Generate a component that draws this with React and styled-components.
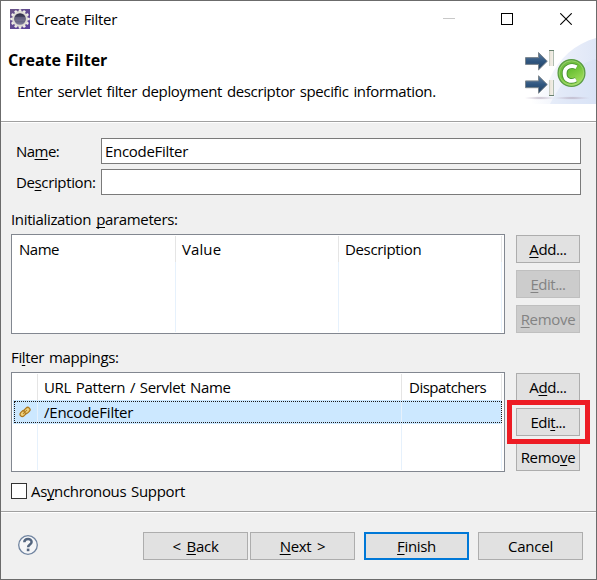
import React from 'react';
import styled, { createGlobalStyle } from 'styled-components';

const Global = createGlobalStyle`
  * { box-sizing: border-box; }
  body { margin: 0; background: #fff; }
`;

const Window = styled.main`
  width: 597px;
  height: 580px;
  display: flex;
  flex-direction: column;
  border: 1px solid #6b6b6b;
  background: #f0f0f0;
  color: #000;
  font: 15px/20px "Open Sans", "Noto Sans", sans-serif;
  overflow: hidden;
`;

const Text = styled.span`
  display: inline-block;
  white-space: pre;
  letter-spacing: ${p => p.$ls ?? -0.25}px;
  word-spacing: ${p => p.$ws ?? 0}px;
`;

const Key = styled.span`
  text-decoration: underline;
  text-decoration-thickness: 1px;
  text-underline-offset: 2px;
  text-decoration-skip-ink: none;
`;

const TitleBar = styled.header`
  height: 37px;
  display: flex;
  align-items: flex-start;
  padding: 8px 0 0 9px;
  background: #fff;
`;

const Caption = styled.div`
  flex: 1;
  padding-left: 5px;
`;

const WindowControls = styled.div`
  display: flex;
  padding: 4px 24px 0 0;
  svg { display: block; }
  svg:nth-child(2) { margin: 0 47px 0 46px; }
`;

const Banner = styled.section`
  height: 84px;
  display: flex;
  justify-content: space-between;
  background: #fff;
  border-bottom: 1px solid #a0a0a0;
`;

const BannerCopy = styled.div`
  padding: 12px 0 0 7px;
`;

const Heading = styled.h1`
  margin: 0;
  font-size: 16px;
  line-height: 20px;
  font-weight: 700;
  letter-spacing: 0;
`;

const Message = styled.p`
  margin: 11px 0 0 9px;
`;

const Content = styled.section`
  height: 389px;
  border-top: 1px solid #fff;
  padding: 15px 15px 0 10px;
`;

const Fields = styled.div`
  display: grid;
  grid-template-columns: 85px 480px;
  row-gap: 5px;
  padding-left: 5px;
`;

const FieldLabel = styled.label`
  padding-top: 3px;
`;

const Field = styled.div`
  height: 26px;
  padding: 2px 3px;
  border: 1px solid #7a7a7a;
  background: #fff;
`;

const SectionLabel = styled.div`
  height: ${p => p.$height}px;
  padding-top: ${p => p.$top}px;
`;

const Group = styled.div`
  display: flex;
  gap: 11px;
`;

const Table = styled.div`
  width: 494px;
  height: 100px;
  border: 1px solid #828790;
  background: #fff;
  padding: 1px 2px 1px 1px;
`;

const Row = styled.div`
  display: grid;
  grid-template-columns: ${p => p.$columns};
  height: ${p => p.$height}px;
  background: ${p => (p.$selected ? '#cce8ff' : 'transparent')};
  ${p => p.$selected && `
    position: relative;
    &::after {
      content: "";
      position: absolute;
      inset: 1px 0 1px 1px;
      border: 1px dotted #1a1a1a;
    }
  `}
`;

const Cell = styled.div`
  border-right: 1px solid ${p => (p.$header ? '#e5e5e5' : '#e6f1fc')};
  padding: ${p => p.$top ?? 0}px 0 0 ${p => p.$left ?? 6}px;
`;

const ButtonStack = styled.div`
  display: flex;
  flex-direction: column;
  gap: 7px;
  padding-top: 1px;
`;

const Button = styled.button`
  width: ${p => (p.$wide ? 105 : 64)}px;
  height: 28px;
  flex: none;
  padding: 0;
  display: flex;
  align-items: flex-start;
  justify-content: center;
  padding-top: ${p => (p.$primary ? 2 : 3)}px;
  border: ${p => (p.$primary ? '2px solid #0078d7' : '1px solid #adadad')};
  background: #e1e1e1;
  color: #000;
  font: inherit;
  &:disabled {
    background: #ccc;
    border-color: #bfbfbf;
    color: #838383;
  }
`;

const Marked = styled.div`
  position: relative;
  height: 28px;
  &::after {
    content: "";
    position: absolute;
    inset: -8px -10px -8px -9px;
    border: 5px solid #ed1c24;
  }
`;

const CheckRow = styled.label`
  display: flex;
  gap: 4px;
  padding-top: 9px;
`;

const CheckBox = styled.span`
  width: 16px;
  height: 16px;
  margin-top: 2px;
  border: 1px solid #333;
  background: #fff;
`;

const Footer = styled.footer`
  flex: 1;
  display: flex;
  align-items: flex-start;
  border-top: 1px solid #a0a0a0;
  box-shadow: inset 0 1px #fff;
  padding: 20px 13px 0 16px;
`;

const HelpSlot = styled.div`
  flex: 1;
  padding-top: 2px;
  svg { display: block; }
`;

const Actions = styled.div`
  display: flex;
  gap: 9px;
`;

const StepButtons = styled.div`
  display: flex;
  gap: 2px;
`;

const teeth = Array.from({ length: 12 }, (_, i) => i * 30);

function GearIcon() {
  return (
    <svg width="20" height="20" viewBox="0 0 20 20">
      <defs>
        <linearGradient id="tile" x1="0" y1="0" x2="1" y2="1">
          <stop offset="0" stopColor="#6b5587" />
          <stop offset="1" stopColor="#58409c" />
        </linearGradient>
        <linearGradient id="hub" x1="0" y1="0" x2="0" y2="1">
          <stop offset="0" stopColor="#24213b" />
          <stop offset="1" stopColor="#8785a5" />
        </linearGradient>
      </defs>
      <rect width="20" height="20" fill="url(#tile)" />
      {teeth.map(a => (
        <rect key={a} x="8.7" y="0.3" width="2.6" height="3.4" rx="0.6" fill="#f0eee8" transform={`rotate(${a} 10 10)`} />
      ))}
      <circle cx="10" cy="10" r="6.9" fill="url(#hub)" stroke="#dedcd5" strokeWidth="2.1" />
      <path d="M5 9h10M5.2 11h9.6" stroke="#a5a2bd" strokeWidth="0.5" />
    </svg>
  );
}

function Arrow({ y }) {
  return (
    <path
      transform={`translate(0 ${y})`}
      d="M1.5 5.6H14.5V.5L23.3 9.2L14.5 17.9V12.4H1.5Z"
      fill="url(#steel)"
      stroke="#7b858d"
      strokeWidth="1"
    />
  );
}

function FilterArt() {
  return (
    <svg width="72" height="66" viewBox="0 0 72 66">
      <defs>
        <linearGradient id="sky" x1="0" y1="0" x2="1" y2="0">
          <stop offset="0.1" stopColor="#fff" />
          <stop offset="0.65" stopColor="#e8edf9" />
          <stop offset="1" stopColor="#dfe7f7" />
        </linearGradient>
        <linearGradient id="steel" x1="0" y1="0" x2="0" y2="1">
          <stop offset="0" stopColor="#617f9e" />
          <stop offset="0.5" stopColor="#2f5680" />
          <stop offset="1" stopColor="#244160" />
        </linearGradient>
        <linearGradient id="post" x1="0" y1="0" x2="1" y2="0">
          <stop offset="0" stopColor="#b9c2b8" />
          <stop offset="0.3" stopColor="#ebe6dc" />
          <stop offset="0.7" stopColor="#f1ede5" />
          <stop offset="1" stopColor="#8fa598" />
        </linearGradient>
        <linearGradient id="leaf" x1="0" y1="0" x2="0.6" y2="1">
          <stop offset="0" stopColor="#7cba57" />
          <stop offset="0.5" stopColor="#6ac034" />
          <stop offset="1" stopColor="#a4df5e" />
        </linearGradient>
        <radialGradient id="shade">
          <stop offset="0" stopColor="#a99bad" stopOpacity="0.75" />
          <stop offset="1" stopColor="#c9c0d4" stopOpacity="0" />
        </radialGradient>
      </defs>
      <path d="M72 0C51 6 35 20 26 40C21 52 11 61 0 66H72Z" fill="url(#sky)" />
      <path d="M72 21C52 26 38 43 26 66H72Z" fill="#d3def5" opacity="0.4" />
      <ellipse cx="16" cy="60" rx="16" ry="1.8" fill="url(#shade)" />
      <ellipse cx="48" cy="60" rx="19" ry="1.8" fill="url(#shade)" />
      <Arrow y={14} />
      <Arrow y={37.3} />
      <rect x="25" y="12" width="5" height="16" fill="url(#post)" />
      <path d="M25 12.5h5" stroke="#68816f" />
      <rect x="25" y="42" width="5" height="16" fill="url(#post)" />
      <path d="M25 57.5h5" stroke="#68816f" />
      <circle cx="47.5" cy="35" r="13.4" fill="url(#leaf)" stroke="#5a9c45" strokeWidth="1.3" />
      <circle cx="47.5" cy="35" r="12.2" fill="none" stroke="#a8da82" strokeWidth="0.8" opacity="0.8" />
      <path d="M52.5 29.3C47.5 26.4 40.6 28.7 40.6 35.4C40.6 42.4 47 44.4 52 41.6" fill="none" stroke="#499332" strokeWidth="5.6" />
      <path d="M52.5 29.3C47.5 26.4 40.6 28.7 40.6 35.4C40.6 42.4 47 44.4 52 41.6" fill="none" stroke="#fff" strokeWidth="3.9" />
    </svg>
  );
}

function MappingIcon() {
  return (
    <svg width="12" height="12" viewBox="0 0 12 12" display="block">
      <g transform="rotate(-45 6 6)" fill="#f0d27c" stroke="#ad7920" strokeWidth="1.3">
        <rect x="0.2" y="3.4" width="6.4" height="4.6" rx="2.3" />
        <rect x="5.4" y="4" width="6.4" height="4.6" rx="2.3" />
        <path d="M3.2 6h5.6" strokeWidth="1" />
      </g>
    </svg>
  );
}

function HelpIcon() {
  return (
    <svg width="22" height="22" viewBox="0 0 22 22">
      <circle cx="11" cy="11" r="9.3" fill="#f5f6f8" stroke="#7084a0" strokeWidth="1.3" />
      <path d="M7.3 8.2C7.5 4.2 14.6 4 14.6 8C14.6 10.6 11.1 10.3 11.1 13.2" fill="none" stroke="#53657f" strokeWidth="2.5" />
      <rect x="9.8" y="14.6" width="2.6" height="2.6" fill="#53657f" />
    </svg>
  );
}

const initColumns = '163px 163px 163px';
const mapColumns = '25px 364px 100px';

export default function App() {
  return (
    <>
      <Global />
      <Window>
        <TitleBar>
          <GearIcon />
          <Caption><Text $ls={-0.33} $ws={1}>Create Filter</Text></Caption>
          <WindowControls>
            <svg width="12" height="12"><path d="M0 5.5H12" stroke="#c8c8c8" /></svg>
            <svg width="12" height="12"><rect x=".5" y=".5" width="11" height="11" fill="none" stroke="#000" /></svg>
            <svg width="12" height="12"><path d="M.3.3L11.7 11.7M11.7.3L.3 11.7" stroke="#000" strokeWidth="1.1" /></svg>
          </WindowControls>
        </TitleBar>

        <Banner>
          <BannerCopy>
            <Heading>Create Filter</Heading>
            <Message><Text $ls={-0.36} $ws={1.3}>Enter servlet filter deployment descriptor specific information.</Text></Message>
          </BannerCopy>
          <FilterArt />
        </Banner>

        <Content>
          <Fields>
            <FieldLabel><Text $ls={-0.55}>Na<Key>m</Key>e:</Text></FieldLabel>
            <Field><Text $ls={-0.3}>EncodeFilter</Text></Field>
            <FieldLabel><Text $ls={-0.37}>De<Key>s</Key>cription:</Text></FieldLabel>
            <Field />
          </Fields>

          <SectionLabel $height={39} $top={14}>
            <Text $ls={-0.35} $ws={1.6}>Initialization <Key>p</Key>arameters:</Text>
          </SectionLabel>
          <Group>
            <Table>
              <Row $columns={initColumns} $height={26}>
                <Cell $header $top={3}><Text $ls={-0.5}>Name</Text></Cell>
                <Cell $header $top={3}><Text $ls={0.1}>Value</Text></Cell>
                <Cell $header $top={3}><Text $ls={-0.35}>Description</Text></Cell>
              </Row>
              <Row $columns={initColumns} $height={70}>
                <Cell /><Cell /><Cell />
              </Row>
            </Table>
            <ButtonStack>
              <Button><Text $ls={-0.4}><Key>A</Key>dd...</Text></Button>
              <Button disabled><Text $ls={-0.5}><Key>E</Key>dit...</Text></Button>
              <Button disabled><Text $ls={-0.3}><Key>R</Key>emove</Text></Button>
            </ButtonStack>
          </Group>

          <SectionLabel $height={38} $top={13}>
            <Text $ls={-0.36} $ws={1.4}>Fi<Key>l</Key>ter mappings:</Text>
          </SectionLabel>
          <Group>
            <Table>
              <Row $columns={mapColumns} $height={26}>
                <Cell $header />
                <Cell $header $top={3}><Text $ls={-0.34} $ws={1.2}>URL Pattern / Servlet Name</Text></Cell>
                <Cell $header $top={3} $left={7}><Text $ls={-0.5}>Dispatchers</Text></Cell>
              </Row>
              <Row $columns={mapColumns} $height={24} $selected>
                <Cell $top={6} $left={6}><MappingIcon /></Cell>
                <Cell $top={2}><Text $ls={-0.22}>/EncodeFilter</Text></Cell>
                <Cell />
              </Row>
              <Row $columns={mapColumns} $height={46}>
                <Cell /><Cell /><Cell />
              </Row>
            </Table>
            <ButtonStack>
              <Button><Text $ls={-0.4}>A<Key>d</Key>d...</Text></Button>
              <Marked><Button><Text $ls={-0.5}>Edi<Key>t</Key>...</Text></Button></Marked>
              <Button><Text $ls={-0.3}>Remo<Key>v</Key>e</Text></Button>
            </ButtonStack>
          </Group>

          <CheckRow>
            <CheckBox />
            <Text $ls={-0.35} $ws={1.3}>As<Key>y</Key>nchronous Support</Text>
          </CheckRow>
        </Content>

        <Footer>
          <HelpSlot><HelpIcon /></HelpSlot>
          <Actions>
            <StepButtons>
              <Button $wide><Text $ls={-0.25} $ws={2}>&lt; <Key>B</Key>ack</Text></Button>
              <Button $wide><Text $ls={-0.3} $ws={2}><Key>N</Key>ext &gt;</Text></Button>
            </StepButtons>
            <Button $wide $primary><Text $ls={-0.35}><Key>F</Key>inish</Text></Button>
            <Button $wide><Text $ls={-0.2}>Cancel</Text></Button>
          </Actions>
        </Footer>
      </Window>
    </>
  );
}
